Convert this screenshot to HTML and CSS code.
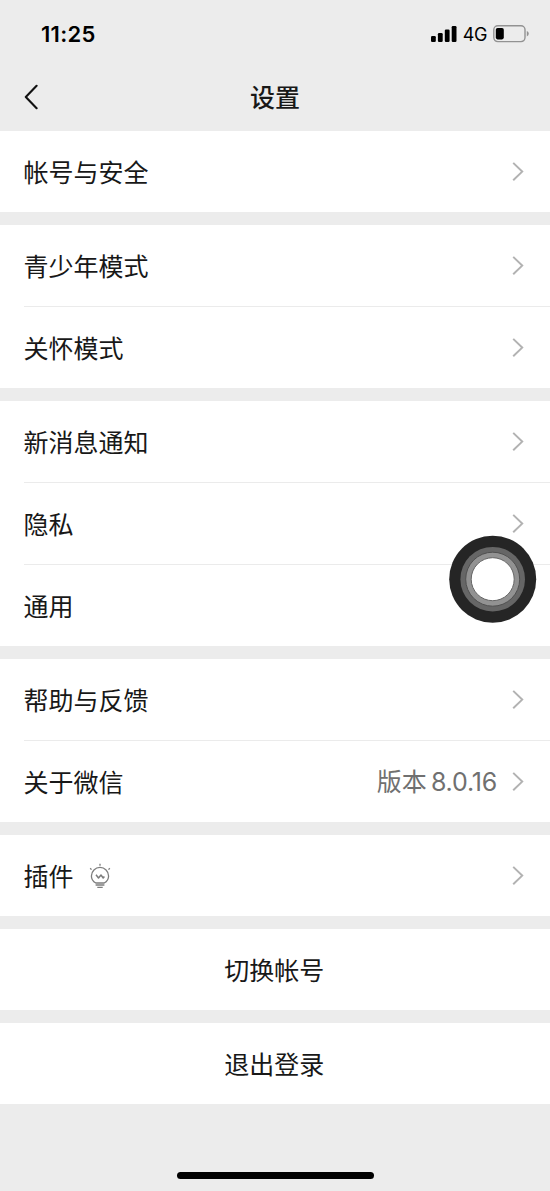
FILE: index.html
```html
<!DOCTYPE html>
<html lang="zh-CN">
<head>
<meta charset="utf-8">
<title>设置</title>
<link rel="stylesheet" href="styles.css">
</head>
<body>
<svg width="0" height="0" class="defs"><defs><symbol id="chevron" viewBox="0 0 12 20"><path d="M1.2 .9 10.2 9.600 1.2 18.300" fill="none" stroke="#b2b2b2" stroke-width="2"/></symbol></defs></svg>
<div class="screen">
  <header class="top">
    <div class="status">
      <span class="time">11:25</span>
      <div class="indicators">
        <svg class="signal" width="26" height="16" viewBox="0 0 26 16"><rect x="0" y="10" width="4.8" height="6" rx="1.2"/><rect x="6.9" y="7" width="4.8" height="9" rx="1.2"/><rect x="13.8" y="3.6" width="4.8" height="12.4" rx="1.2"/><rect x="20.7" y="0" width="4.8" height="16" rx="1.2"/></svg>
        <span class="network">4G</span>
        <svg class="battery" width="37" height="18" viewBox="0 0 37 18"><rect x=".8" y=".8" width="31.2" height="15.8" rx="4" fill="none" stroke="#929292" stroke-width="1.4"/><rect x="2.8" y="3" width="8" height="11.4" rx="1.8"/><path d="M33.8 6v5.4q2-.8 2-2.7t-2-2.7z" fill="#929292"/></svg>
      </div>
    </div>
    <div class="nav">
      <svg class="back" width="14" height="26" viewBox="0 0 14 26"><path d="M12.6 1.8 1.8 13l10.8 11.2" fill="none" stroke="#111" stroke-width="2.1" stroke-linecap="round" stroke-linejoin="round"/></svg>
      <h1 class="title">设置</h1>
    </div>
  </header>
  <main class="groups">
    <section class="group">
      <div class="row"><span class="label">帐号与安全</span><svg class="chevron"><use href="#chevron"/></svg></div>
    </section>
    <section class="group">
      <div class="row"><span class="label">青少年模式</span><svg class="chevron"><use href="#chevron"/></svg></div>
      <div class="row"><span class="label">关怀模式</span><svg class="chevron"><use href="#chevron"/></svg></div>
    </section>
    <section class="group">
      <div class="row"><span class="label">新消息通知</span><svg class="chevron"><use href="#chevron"/></svg></div>
      <div class="row"><span class="label">隐私</span><svg class="chevron"><use href="#chevron"/></svg></div>
      <div class="row"><span class="label">通用</span><svg class="chevron"><use href="#chevron"/></svg></div>
    </section>
    <section class="group">
      <div class="row"><span class="label">帮助与反馈</span><svg class="chevron"><use href="#chevron"/></svg></div>
      <div class="row"><span class="label">关于微信</span><span class="version">版本<span class="number">8.0.16</span></span><svg class="chevron"><use href="#chevron"/></svg></div>
    </section>
    <section class="group">
      <div class="row"><span class="label">插件</span>
        <svg class="bulb" width="22" height="26" viewBox="0 0 22 26" fill="none" stroke="#7d7d7d" stroke-width="1.3"><path d="M6.800 20C4.200 18.600 2.400 16 2.400 13a8.600 8.600 0 0 1 17.200 0c0 3-1.800 5.600-4.400 7z"/><path d="M7 11.800l2.500 3.200 2.500-3 2.200 3 1.200-1.400" stroke-width="1.500" stroke-linejoin="round"/><path d="M6.600 22h8.800M8.300 24.300h5.400M11 .8v1.900M1.200 5.200l1.300 1.400M20.800 5.200l-1.300 1.400"/></svg>
        <svg class="chevron"><use href="#chevron"/></svg></div>
    </section>
    <section class="group"><div class="row action"><span class="label">切换帐号</span></div></section>
    <section class="group"><div class="row action"><span class="label">退出登录</span></div></section>
  </main>
  <footer class="home"><div class="home-bar"></div></footer>
  <svg class="touch" width="88" height="88" viewBox="0 0 88 88"><circle cx="43.700" cy="44.200" r="43.500" fill="#252525"/><circle cx="43.700" cy="44.200" r="32.300" fill="#666"/><circle cx="43.700" cy="44.200" r="27" fill="#929292" stroke="#505050" stroke-width="1"/><circle cx="43.700" cy="44.200" r="21.500" fill="#fff" stroke="#666" stroke-width="1"/></svg>
</div>
</body>
</html>
```
FILE: styles.css
```css
* { box-sizing: border-box; }
body {
  margin: 0;
  background: #ececec;
  color: #181818;
  font-family: Inter, "Noto Sans CJK SC", sans-serif;
}
.defs { position: absolute; }
.screen {
  position: relative;
  display: flex;
  flex-direction: column;
  width: 550px;
  height: 1191px;
  overflow: hidden;
}
.top { height: 131px; }
.status {
  display: flex;
  justify-content: space-between;
  align-items: center;
  height: 68px;
  padding: 0 20px 0 41px;
  color: #000;
}
.time { font-size: 22px; font-weight: 600; letter-spacing: .3px; }
.indicators { display: flex; align-items: center; }
.network { margin: 0 6px 0 6px; font-size: 18px; letter-spacing: -.4px; }
.nav {
  display: grid;
  grid-template-columns: 1fr auto 1fr;
  align-items: center;
  height: 58px;
  padding: 0 24px;
}
.title {
  grid-column: 2;
  margin: 0;
  padding-top: 2px;
  font-size: 25px;
  line-height: 36px;
  font-weight: 500;
}
.back { grid-row: 1; }
.groups { display: flex; flex-direction: column; gap: 13px; }
.group { background: #fff; }
.row {
  display: flex;
  align-items: center;
  height: 81px;
  margin-left: 24px;
  padding-right: 26px;
  font-size: 25px;
  line-height: 36px;
}
.row + .row { height: 82px; border-top: 1px solid #ebebeb; }
.label { padding-top: 2px; margin-left: -.5px; }
.action { justify-content: center; margin: 0; padding: 0 1px 0 0; }
.chevron { width: 12px; height: 20px; margin-left: auto; }
.version { margin-left: auto; padding-top: 1px; color: #707070; }
.number { margin-left: 4px; letter-spacing: -.2px; }
.version + .chevron { margin-left: 15px; }
.bulb { margin-left: 15.500px; }
.home {
  display: flex;
  justify-content: center;
  align-items: flex-end;
  flex: 1;
  padding-bottom: 12px;
}
.home-bar { width: 197px; height: 7px; border-radius: 4px; background: #000; }
.touch { position: absolute; left: 449px; top: 535px; }
```
